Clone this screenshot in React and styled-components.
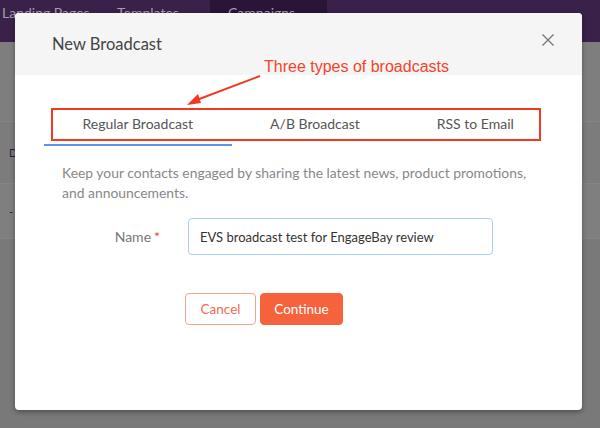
import React from "react";
import styled, { createGlobalStyle } from "styled-components";

const GlobalStyle = createGlobalStyle`
  html, body { margin: 0; padding: 0; }
  body { background: #7b7b7c; overflow: hidden; font-family: Lato, "Noto Sans", sans-serif; }
  * { box-sizing: border-box; }
`;

const Page = styled.div`
  position: relative;
  width: 600px;
  height: 428px;
  overflow: hidden;
  background: #7b7b7c;
`;

const NavBar = styled.div`
  display: flex;
  height: 42px;
  background: #392149;
`;

const NavItem = styled.div`
  display: flex;
  align-items: flex-start;
  padding: 4px 0 0;
  width: ${(p) => p.$w}px;
  padding-left: ${(p) => p.$pl}px;
  background: ${(p) => (p.$active ? "#291537" : "transparent")};
  color: #a79bb0;
  font-size: 14px;
  white-space: nowrap;
`;

const BgRow = styled.div`
  height: ${(p) => p.$h}px;
  background: ${(p) => p.$bg};
  border-bottom: 1px solid ${(p) => p.$line || "transparent"};
  padding-left: 9px;
  color: #2e1a3d;
  font-size: 11px;
  display: flex;
  align-items: center;
`;

const Modal = styled.div`
  position: absolute;
  left: 15px;
  top: 13px;
  width: 567px;
  height: 397px;
  background: #fff;
  border-radius: 4px;
  box-shadow: 0 2px 5px rgba(0, 0, 0, 0.35);
  overflow: hidden;
`;

const Header = styled.div`
  position: relative;
  height: 62px;
  background: #f5f5f5;
  display: flex;
  align-items: center;
  padding-left: 37px;
`;

const Title = styled.h2`
  margin: 0;
  font-weight: 400;
  font-size: 16.5px;
  color: #444;
`;

const Close = styled.button`
  position: absolute;
  right: 27px;
  top: 20px;
  width: 14px;
  height: 14px;
  padding: 0;
  border: 0;
  background: none;
  display: flex;
`;

const Body = styled.div`
  padding: 28px 29px 0;
`;

const Tabs = styled.div`
  display: flex;
`;

const Tab = styled.div`
  padding: 11px 38.5px 10px;
  line-height: 20px;
  font-size: 14px;
  color: #555;
  border-bottom: 2px solid ${(p) => (p.$active ? "#5b93ee" : "transparent")};
  white-space: nowrap;
`;

const Description = styled.p`
  margin: 17px 0 0 18px;
  max-width: 476px;
  font-size: 13.9px;
  line-height: 20px;
  color: #888;
`;

const FormRow = styled.div`
  display: grid;
  grid-template-columns: 116px 305px;
  column-gap: 28px;
  align-items: center;
  margin-top: 15px;
`;

const Label = styled.label`
  text-align: right;
  font-size: 14px;
  color: #777;
`;

const Req = styled.span`
  color: #e53d2f;
  margin-left: 3px;
`;

const Input = styled.input`
  height: 37px;
  width: 305px;
  border: 1px solid #a9cdf6;
  border-radius: 4px;
  padding: 0 11px;
  font-family: Lato, "Noto Sans", sans-serif;
  font-size: 13px;
  color: #333;
  outline: none;
`;

const Actions = styled.div`
  display: flex;
  gap: 4px;
  margin: 38px 0 0 141px;
`;

const Button = styled.button`
  height: 32px;
  width: ${(p) => p.$w}px;
  border-radius: 4px;
  font-family: Lato, "Noto Sans", sans-serif;
  font-size: 13.5px;
  cursor: pointer;
  border: 1px solid ${(p) => (p.$primary ? "#f5623c" : "#f6a491")};
  background: ${(p) => (p.$primary ? "#f5623c" : "#fff")};
  color: ${(p) => (p.$primary ? "#fff" : "#f26b4f")};
`;

const Annotation = styled.div`
  position: absolute;
  left: 264px;
  top: 58px;
  font-family: "Liberation Sans", Arial, sans-serif;
  font-size: 16px;
  color: #f5432b;
  white-space: nowrap;
`;

const HighlightBox = styled.div`
  position: absolute;
  left: 51px;
  top: 108px;
  width: 490px;
  height: 33px;
  border: 2px solid #f2391f;
`;

const ArrowSvg = styled.svg`
  position: absolute;
  left: 180px;
  top: 70px;
`;

export default function App() {
  return (
    <>
      <GlobalStyle />
      <Page>
        <NavBar>
          <NavItem $w={117} $pl={2}>Landing Pages</NavItem>
          <NavItem $w={93} $pl={0}>Templates</NavItem>
          <NavItem $w={117} $pl={18} $active>Campaigns ⌄</NavItem>
          <NavItem $w={60} $pl={19}>···</NavItem>
        </NavBar>
        <BgRow $h={80} $bg="#7e7e7f" $line="#858586" />
        <BgRow $h={62} $bg="#7c7c7d" $line="#848485">D</BgRow>
        <BgRow $h={55} $bg="#7f7f80" $line="#858586">-</BgRow>
        <BgRow $h={200} $bg="#79797a" />

        <Modal>
          <Header>
            <Title>New Broadcast</Title>
            <Close aria-label="Close">
              <svg width="14" height="14" viewBox="0 0 14 14">
                <path d="M1.5 1.5 L12.5 12.5 M12.5 1.5 L1.5 12.5" stroke="#7a7a7a" strokeWidth="1.4" fill="none" />
              </svg>
            </Close>
          </Header>
          <Body>
            <Tabs>
              <Tab $active>Regular Broadcast</Tab>
              <Tab>A/B Broadcast</Tab>
              <Tab>RSS to Email</Tab>
            </Tabs>
            <Description>
              Keep your contacts engaged by sharing the latest news, product promotions, and announcements.
            </Description>
            <FormRow>
              <Label>
                Name<Req>*</Req>
              </Label>
              <Input defaultValue="EVS broadcast test for EngageBay review" />
            </FormRow>
            <Actions>
              <Button $w={71}>Cancel</Button>
              <Button $w={83} $primary>Continue</Button>
            </Actions>
          </Body>
        </Modal>

        <Annotation>Three types of broadcasts</Annotation>
        <HighlightBox />
        <ArrowSvg width="90" height="40" viewBox="0 0 90 40">
          <path d="M80 6 L14 31" stroke="#f2391f" strokeWidth="2" fill="none" />
          <path d="M7 35 L18 24 L21 33 Z" fill="#f2391f" />
        </ArrowSvg>
      </Page>
    </>
  );
}
